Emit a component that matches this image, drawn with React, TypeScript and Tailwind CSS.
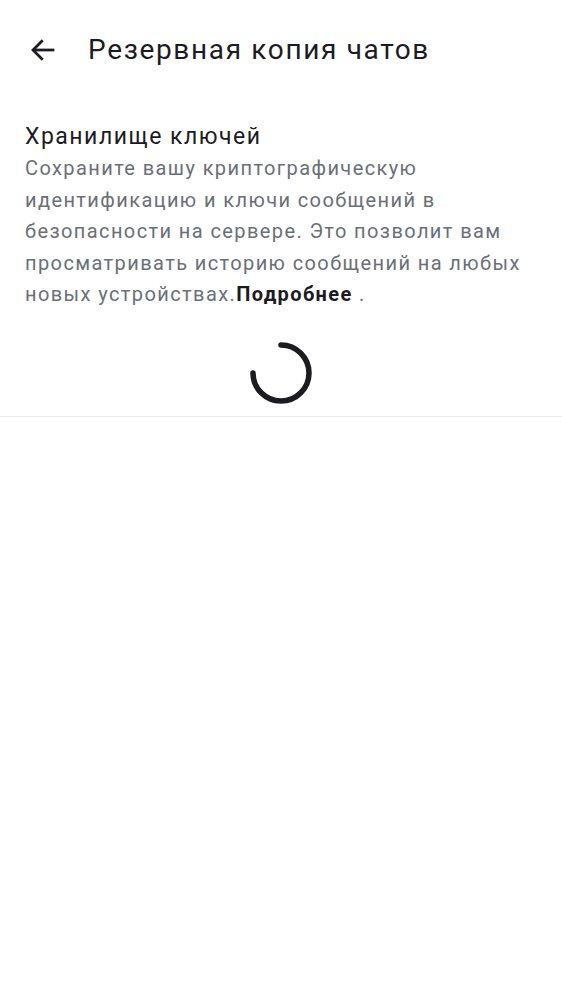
import React from "react";

export default function App() {
  return (
    <div className="min-h-screen bg-white" style={{ fontFamily: "Roboto, 'Noto Sans', sans-serif" }}>
      <div className="flex items-center h-[100px] pl-[28px]">
        <svg width="30" height="30" viewBox="0 0 24 24" fill="none" stroke="#1c1b1f" strokeWidth="2.2" strokeLinecap="square">
          <path d="M20 12H5" />
          <path d="M11 5l-7 7 7 7" strokeLinejoin="miter" />
        </svg>
        <h1 className="ml-[30px] text-[28px] leading-none tracking-[1.65px] text-[#1c1b1f]">Резервная копия чатов</h1>
      </div>
      <div className="px-[25px] pt-[21px]">
        <div className="text-[23px] leading-[31px] tracking-[1.5px] text-[#1c1b1f]">Хранилище ключей</div>
        <p className="mt-[1px] text-[20px] leading-[31.5px] tracking-[1.4px] text-[#6a6f78]">
          Сохраните вашу криптографическую идентификацию и ключи сообщений в безопасности на сервере. Это позволит вам просматривать историю сообщений на любых новых устройствах.
          <span className="font-bold text-[#1c1b1f]">Подробнее</span> .
        </p>
      </div>
      <div className="flex justify-center pt-[30px] pb-[11px]">
        <svg width="64" height="64" viewBox="0 0 64 64" fill="none">
          <path d="M32 4 A28 28 0 1 1 4 32" stroke="#1c1b1f" strokeWidth="5.5" strokeLinecap="round" />
        </svg>
      </div>
      <div className="h-px bg-[#ececf0]" />
    </div>
  );
}
